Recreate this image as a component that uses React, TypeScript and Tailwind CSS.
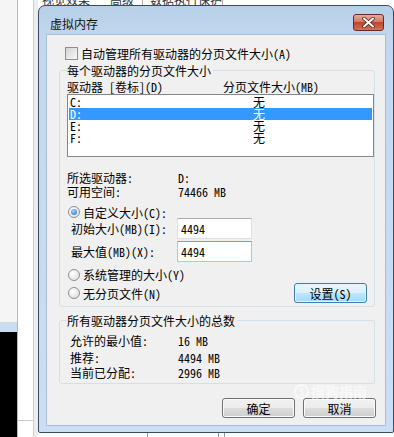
import React from 'react';

const drives = [
  { d: 'C:', size: '无' },
  { d: 'D:', size: '无', sel: true },
  { d: 'E:', size: '无' },
  { d: 'F:', size: '无' },
];

function Radio({ on }: { on?: boolean }) {
  return (
    <span className="flex h-[12px] w-[12px] shrink-0 items-center justify-center rounded-full border border-[#8f8f8f] bg-[radial-gradient(circle_at_35%_35%,#ffffff,#d9d9d9)]">
      {on && <span className="h-[6px] w-[6px] rounded-full bg-[radial-gradient(circle_at_40%_35%,#9fd8ff,#1d63c9)]" />}
    </span>
  );
}

function WinButton({ label, def }: { label: string; def?: boolean }) {
  return (
    <button
      className={
        def
          ? 'flex h-[20px] w-[73px] items-center justify-center rounded-[3px] border border-[#3c7fb1] bg-[linear-gradient(#eaf6fd,#d9f0fc_50%,#bee6fd_50%,#a7d9f5)] shadow-[inset_0_0_0_1px_#e4f4fc]'
          : 'flex h-[20px] w-[73px] items-center justify-center rounded-[3px] border border-[#707070] bg-[linear-gradient(#f2f2f2,#ebebeb_50%,#dddddd_50%,#cfcfcf)] shadow-[inset_0_0_0_1px_#fbfbfb]'
      }
    >
      {label}
    </button>
  );
}

export default function App() {
  return (
    <div className="flex h-[437px] w-[394px] overflow-hidden bg-white text-[12px] leading-[13px] text-black font-['Noto_Sans_Mono_CJK_SC','Noto_Sans_CJK_SC','Liberation_Mono',monospace]">
      {/* parent window (performance options) peeking out on the left */}
      <div className="flex w-[38px] shrink-0">
        <div className="flex w-[17px] flex-col">
          <div className="h-[322px] bg-[#f5f5f5]" />
          <div className="h-[10px] bg-[#cadcf0]" />
          <div className="flex-1 bg-black" />
        </div>
        <div className="flex w-[16px] flex-col border-l border-[#b9b9b9] bg-white">
          <div className="h-[420px]" />
          <div className="flex-1 border-t border-[#c8c8c8]" />
        </div>
        <div className="w-[5px] border-l border-[#cfcfcf] bg-[#ededed]" />
      </div>

      <div className="flex w-[356px] flex-col">
        {/* tabs of the parent window, mostly hidden */}
        <div className="h-[5px] overflow-hidden bg-white">
          <div className="-mt-[7px] flex text-[#333]">
            <span className="ml-[4px] w-[58px]">视觉效果</span>
            <span className="w-[43px] border-r border-[#b0b0b0] pl-[10px]">高级</span>
            <span className="w-[80px] border-r border-[#b0b0b0] pl-[7px]">数据执行保护</span>
          </div>
        </div>

        {/* 虚拟内存 dialog */}
        <div className="flex h-[428px] flex-col rounded-t-[7px] rounded-b-[2px] border border-[#3a4c61] bg-[linear-gradient(180deg,#b8cfe9,#c3d8ee_8%,#cbdef3)]">
          <div className="flex h-[29px] items-start">
            <span className="ml-[11px] mt-[11px] text-[#111]">虚拟内存</span>
            <div className="ml-auto mr-[9px] mt-[8px] flex h-[17px] w-[31px] items-center justify-center rounded-[3px] border border-[#6b2a22] bg-[linear-gradient(#e9a99a,#d47a66_45%,#c2442d_50%,#d0735a)]">
              <svg width="13" height="11" viewBox="0 0 13 11">
                <path d="M2 1.5 L11 9.5 M11 1.5 L2 9.5" stroke="#5a2118" strokeWidth="3.6" strokeLinecap="round" />
                <path d="M2 1.5 L11 9.5 M11 1.5 L2 9.5" stroke="#ffffff" strokeWidth="2" strokeLinecap="round" />
              </svg>
            </div>
          </div>

          <div className="relative mx-[8px] flex h-[390px] flex-col bg-[#f0f0f0] pt-[12px] shadow-[0_0_0_1px_#a9bdd4]">
            <div className="ml-[18px] flex h-[13px] items-center">
              <span className="h-[13px] w-[13px] border border-[#8e8f8f] bg-[linear-gradient(135deg,#d4d4d4,#f7f7f7)]" />
              <span className="ml-[3px]">自动管理所有驱动器的分页文件大小(A)</span>
            </div>

            <div className="ml-[12px] mt-[10px] flex w-[316px] flex-col rounded-[3px] border border-[#d5dfe5] pb-[3px] pl-[7px]">
              <span className="-mt-[7px] h-[13px] w-fit bg-[#f0f0f0] pr-[2px]">每个驱动器的分页文件大小</span>
              <div className="mt-[3px] flex h-[13px] items-center">
                <span className="w-[156px]">驱动器 [卷标](D)</span>
                <span>分页文件大小(MB)</span>
              </div>
              <div className="mt-[1px] h-[63px] w-[307px] border border-[#828790] bg-white p-px">
                {drives.map(r => (
                  <div key={r.d} className={r.sel ? 'flex h-[12px] items-center bg-[#3399ff] pl-[1px] leading-[12px] text-white' : 'flex h-[12px] items-center pl-[1px] leading-[12px]'}>
                    <span className="w-[183px]">{r.d}</span>
                    <span>{r.size}</span>
                  </div>
                ))}
              </div>
              <div className="mt-[14px] flex h-[13px] items-center">
                <span className="w-[111px]">所选驱动器:</span>
                <span>D:</span>
              </div>
              <div className="mt-[1px] flex h-[13px] items-center">
                <span className="w-[111px]">可用空间:</span>
                <span>74466 MB</span>
              </div>
              <div className="mt-[8px] flex h-[12px] items-center">
                <span className="ml-[1px]"><Radio on /></span>
                <span className="ml-[3px]">自定义大小(C):</span>
              </div>
              <div className="flex h-[21px] items-center">
                <span className="ml-[4px] w-[106px]">初始大小(MB)(I):</span>
                <div className="flex h-[21px] w-[75px] items-center border border-[#dbdfe6] border-t-[#abadb3] bg-white pl-[3px]">4494</div>
              </div>
              <div className="mt-[2px] flex h-[21px] items-center">
                <span className="ml-[4px] w-[106px]">最大值(MB)(X):</span>
                <div className="flex h-[21px] w-[75px] items-center border border-[#a8c9e8] border-t-[#6fa0d0] bg-white pl-[3px]">4494</div>
              </div>
              <div className="mt-[6px] flex h-[13px] items-center">
                <span className="ml-[1px]"><Radio /></span>
                <span className="ml-[3px]">系统管理的大小(Y)</span>
              </div>
              <div className="mt-[2px] flex h-[20px] items-center">
                <span className="ml-[1px]"><Radio /></span>
                <span className="ml-[3px]">无分页文件(N)</span>
                <span className="ml-auto mr-[7px]"><WinButton label="设置(S)" def /></span>
              </div>
            </div>

            <div className="ml-[12px] mt-[13px] flex w-[316px] flex-col rounded-[3px] border border-[#d5dfe5] pb-[4px] pl-[7px]">
              <span className="-mt-[7px] h-[13px] w-fit bg-[#f0f0f0] pr-[2px]">所有驱动器分页文件大小的总数</span>
              <div className="mt-[7px] flex h-[13px] items-center">
                <span className="ml-[3px] w-[108px]">允许的最小值:</span>
                <span>16 MB</span>
              </div>
              <div className="mt-[4px] flex h-[13px] items-center">
                <span className="ml-[3px] w-[108px]">推荐:</span>
                <span>4494 MB</span>
              </div>
              <div className="mt-[2px] flex h-[13px] items-center">
                <span className="ml-[3px] w-[108px]">当前已分配:</span>
                <span>2996 MB</span>
              </div>
            </div>

            <div className="mt-[14px] flex justify-end gap-[8px] pr-[9px]">
              <WinButton label="确定" />
              <WinButton label="取消" />
            </div>

            {/* watermark */}
            <div className="absolute left-[247px] top-[349px] flex items-center gap-[2px] text-[14px] font-bold text-white/60">
              <span className="flex h-[15px] w-[15px] items-center justify-center rounded-full border-2 border-white/60 text-[10px]">S</span>
              <span>搜狗指南</span>
            </div>
          </div>
        </div>

        <div className="flex h-[4px] bg-white">
          <div className="ml-[109px] w-[71px] border-l border-[#9a9a9a]" />
          <div className="w-[7px] border-x border-[#9a9a9a]" />
        </div>
      </div>
    </div>
  );
}
